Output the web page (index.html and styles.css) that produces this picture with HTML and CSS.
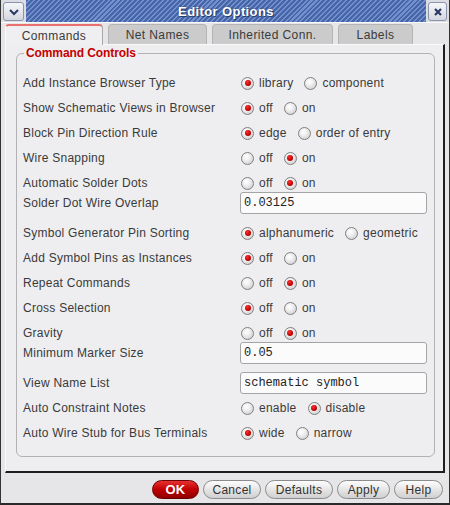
FILE: index.html
```html
<!DOCTYPE html>
<html>
<head>
<meta charset="utf-8">
<link rel="stylesheet" href="styles.css">
</head>
<body>
<div class="window">
  <div class="titlebar">
    <div class="tbtn">
      <svg width="12" height="8" viewBox="0 0 12 8"><path d="M2 2 L6 6 L10 2" fill="none" stroke="#2a3a66" stroke-width="2"/></svg>
    </div>
    <div class="title">Editor Options</div>
    <div class="tbtn">
      <svg width="10" height="10" viewBox="0 0 10 10"><path d="M2 2 L8 8 M8 2 L2 8" fill="none" stroke="#2a3a66" stroke-width="2.2"/></svg>
    </div>
  </div>
  <div class="tabs">
    <div class="tab active w1">Commands</div>
    <div class="tab w2">Net Names</div>
    <div class="tab w3">Inherited Conn.</div>
    <div class="tab w4">Labels</div>
  </div>
  <div class="panel">
    <fieldset class="group">
      <legend>Command Controls</legend>
      <div class="row">
        <span class="label">Add Instance Browser Type</span>
        <span class="opt"><i class="radio on"></i>library</span>
        <span class="opt"><i class="radio"></i>component</span>
      </div>
      <div class="row">
        <span class="label">Show Schematic Views in Browser</span>
        <span class="opt"><i class="radio on"></i>off</span>
        <span class="opt"><i class="radio"></i>on</span>
      </div>
      <div class="row">
        <span class="label">Block Pin Direction Rule</span>
        <span class="opt"><i class="radio on"></i>edge</span>
        <span class="opt"><i class="radio"></i>order of entry</span>
      </div>
      <div class="row">
        <span class="label">Wire Snapping</span>
        <span class="opt"><i class="radio"></i>off</span>
        <span class="opt"><i class="radio on"></i>on</span>
      </div>
      <div class="row">
        <span class="label">Automatic Solder Dots</span>
        <span class="opt"><i class="radio"></i>off</span>
        <span class="opt"><i class="radio on"></i>on</span>
      </div>
      <div class="row field">
        <span class="label">Solder Dot Wire Overlap</span>
        <span class="input">0.03125</span>
      </div>
      <div class="row after-field">
        <span class="label">Symbol Generator Pin Sorting</span>
        <span class="opt"><i class="radio on"></i>alphanumeric</span>
        <span class="opt"><i class="radio"></i>geometric</span>
      </div>
      <div class="row">
        <span class="label">Add Symbol Pins as Instances</span>
        <span class="opt"><i class="radio on"></i>off</span>
        <span class="opt"><i class="radio"></i>on</span>
      </div>
      <div class="row">
        <span class="label">Repeat Commands</span>
        <span class="opt"><i class="radio"></i>off</span>
        <span class="opt"><i class="radio on"></i>on</span>
      </div>
      <div class="row">
        <span class="label">Cross Selection</span>
        <span class="opt"><i class="radio on"></i>off</span>
        <span class="opt"><i class="radio"></i>on</span>
      </div>
      <div class="row">
        <span class="label">Gravity</span>
        <span class="opt"><i class="radio"></i>off</span>
        <span class="opt"><i class="radio on"></i>on</span>
      </div>
      <div class="row field">
        <span class="label">Minimum Marker Size</span>
        <span class="input">0.05</span>
      </div>
      <div class="row field after-field">
        <span class="label">View Name List</span>
        <span class="input">schematic symbol</span>
      </div>
      <div class="row">
        <span class="label">Auto Constraint Notes</span>
        <span class="opt"><i class="radio"></i>enable</span>
        <span class="opt"><i class="radio on"></i>disable</span>
      </div>
      <div class="row">
        <span class="label">Auto Wire Stub for Bus Terminals</span>
        <span class="opt"><i class="radio on"></i>wide</span>
        <span class="opt"><i class="radio"></i>narrow</span>
      </div>
    </fieldset>
  </div>
  <div class="buttons">
    <button class="btn ok">OK</button>
    <button class="btn b-cancel">Cancel</button>
    <button class="btn b-defaults">Defaults</button>
    <button class="btn b-apply">Apply</button>
    <button class="btn b-help">Help</button>
  </div>
</div>
</body>
</html>
```
FILE: styles.css
```css
* { box-sizing: border-box; }
html, body { margin: 0; padding: 0; }
body {
  width: 450px;
  height: 505px;
  overflow: hidden;
  font-family: "Liberation Sans", Arial, sans-serif;
  font-size: 12px;
  color: #3a3a3a;
  background: #e4e4e6;
}
.window {
  width: 450px;
  height: 505px;
  background: #e6e6e8;
  border-left: 1px solid #333;
  border-right: 1px solid #333;
  border-bottom: 2px solid #2a2a2a;
  display: flex;
  flex-direction: column;
}
.titlebar {
  height: 23px;
  display: flex;
  align-items: stretch;
  border-bottom: 1px solid #fafafa;
  background: #dcdde2;
}
.tbtn {
  width: 21px;
  height: 19px;
  margin: 2px 2px 0 2px;
  border: 1px solid #8a94aa;
  border-radius: 3px;
  background: linear-gradient(#f6f7fa, #d4d7df);
  display: flex;
  align-items: center;
  justify-content: center;
}
.tbtn:last-child { margin-left: 2px; margin-right: 2px; width: 19px; }
.title {
  flex: 1;
  background-color: #4566a8;
  background-image: repeating-linear-gradient(135deg, #4566a8 0px, #4566a8 2px, #7590cc 2px, #7590cc 3.5px);
  color: #fff;
  font-weight: bold;
  font-size: 13px;
  letter-spacing: 0.4px;
  display: flex;
  align-items: center;
  justify-content: center;
  text-shadow: 0 0 2px #2a3f70, 1px 1px 0 #2a3f70;
}
.tabs {
  height: 21px;
  display: flex;
  gap: 5px;
  padding-left: 4px;
  align-items: flex-end;
}
.tab {
  height: 20px;
  display: flex;
  align-items: center;
  justify-content: center;
  background: #cbcbcb;
  border: 1px solid #b4b4b4;
  border-bottom: none;
  border-radius: 4px 4px 0 0;
  color: #3a3a3a;
  letter-spacing: 0.4px;
  padding-top: 1px;
}
.tab.active {
  height: 21px;
  background: #efeff1;
  border-color: #fafafa #a8a8a8 #efeff1 #fafafa;
  border-top: 2px solid #ea7070;
  position: relative;
  z-index: 1;
  margin-bottom: -1px;
}
.w1 { width: 98px; }
.w2 { width: 99px; }
.w3 { width: 121px; }
.w4 { width: 75px; }
.panel {
  margin: 0 4px;
  height: 429px;
  background: #eeeef0;
  border-top: 1px solid #fafafa;
  border-left: 1px solid #fafafa;
  border-right: 2px solid #1e1e1e;
  border-bottom: 2px solid #1e1e1e;
  padding: 1px 9px 0 10px;
}
.group {
  margin: 0;
  border: 1px solid #b2b2b4;
  border-radius: 6px;
  padding: 12px 6px 12px 6px;
  display: flex;
  flex-direction: column;
  gap: 3px;
}
.group legend {
  margin-left: 1px;
  padding: 0 2px;
  color: #c40000;
  font-weight: bold;
  font-size: 12px;
  line-height: 14px;
  letter-spacing: -0.1px;
}
.row {
  height: 22px;
  display: flex;
  align-items: center;
  letter-spacing: 0.25px;
}
.row.field { margin-top: -5px; }
.row.after-field { margin-top: 5px; }
.label {
  width: 217px;
  flex: none;
  white-space: nowrap;
}
.opt {
  display: flex;
  align-items: center;
  margin-right: 10px;
  white-space: nowrap;
}
.radio {
  width: 13px;
  height: 13px;
  border-radius: 50%;
  border: 1px solid #808080;
  background: radial-gradient(circle at 40% 35%, #ffffff 0%, #f0f0f0 35%, #c4c4c4 100%);
  margin: 0 5px 0 1px;
  display: flex;
  align-items: center;
  justify-content: center;
}
.radio.on::after {
  content: "";
  width: 6px;
  height: 6px;
  border-radius: 50%;
  background: radial-gradient(circle at 40% 35%, #ff3030, #c00000 60%, #900000);
}
.input {
  width: 187px;
  height: 22px;
  border: 1px solid #a4a4a6;
  border-radius: 3px;
  background: #fbfbfc;
  font-family: "Liberation Mono", "Courier New", monospace;
  font-size: 12px;
  letter-spacing: 0;
  color: #222;
  padding-left: 3px;
  display: flex;
  align-items: center;
}
.buttons {
  display: flex;
  justify-content: flex-end;
  gap: 4px;
  padding: 7px 6px 0 0;
}
.btn {
  height: 19px;
  padding: 0;
  border: 1px solid #8c8c8c;
  border-radius: 10px;
  background: linear-gradient(#fdfdfd, #e6e6e6 50%, #cfcfcf);
  font-family: "Liberation Sans", Arial, sans-serif;
  font-size: 12px;
  color: #333;
  letter-spacing: 0.3px;
}
.btn.ok {
  width: 47px;
  background: linear-gradient(#e83030, #c00000 50%, #900000);
  border-color: #6a0000;
  color: #fff;
  font-weight: bold;
  font-size: 13px;
}
.b-cancel { width: 58px; }
.b-defaults { width: 68px; }
.b-apply { width: 53px; }
.b-help { width: 49px; }
```
